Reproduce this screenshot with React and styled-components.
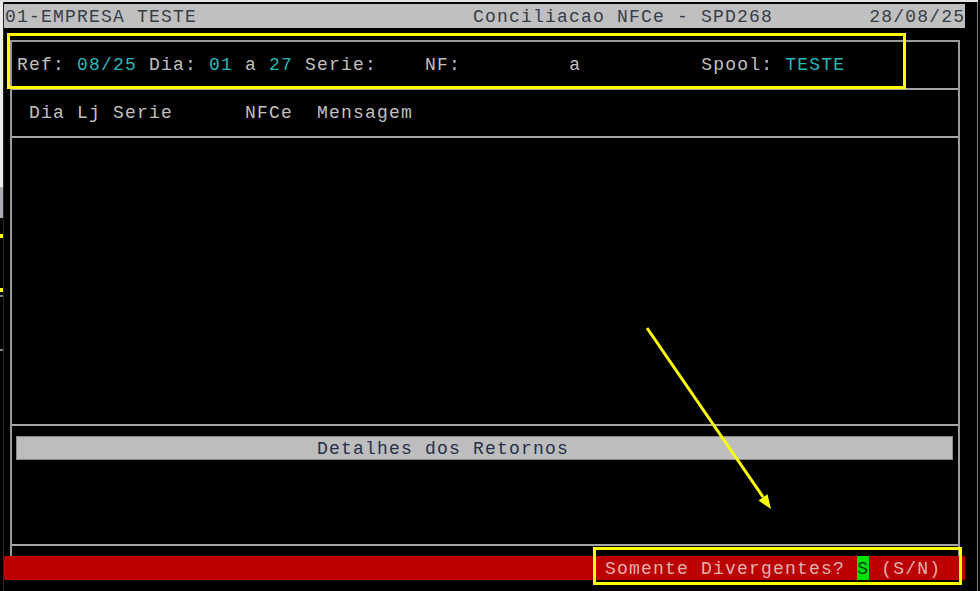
import React from "react";
import styled, { createGlobalStyle } from "styled-components";

const Global = createGlobalStyle`
  html, body { margin: 0; padding: 0; background: #000; }
  #root { width: 980px; height: 591px; }
`;

const Root = styled.div`
  position: relative;
  width: 980px;
  height: 591px;
  background: #000;
  overflow: hidden;
  display: flex;
  flex-direction: column;
  font-family: "Liberation Mono", "Courier New", monospace;
  font-size: 18px;
  letter-spacing: 1.2px;
`;

const TopEdge = styled.div`
  flex: 0 0 2px;
  width: 978px;
  background: #e2e2e2;
`;

const Main = styled.div`
  flex: 1;
  display: flex;
`;

const LeftEdge = styled.div`
  width: 3px;
  display: flex;
  flex-direction: column;
  border-right: 1px solid #262626;
`;

const Seg = styled.div`
  flex: 0 0 ${(p) => p.$h}px;
  background: ${(p) => p.$c};
`;

const Screen = styled.div`
  margin-top: 2px;
  width: 961px;
  height: 576px;
  display: flex;
  flex-direction: column;
`;

const RightLine = styled.div`
  margin-left: 12px;
  width: 1px;
  background: #7c7c7c;
`;

const Line = styled.div`
  box-sizing: border-box;
  height: 24px;
  padding-top: 3px;
  line-height: 21px;
  white-space: pre;
  color: ${(p) => p.$color || "#c0c0c0"};
`;

const TitleBar = styled(Line)`
  background: #c0c0c0;
  color: #383d48;
  padding-left: 1px;
`;

const StatusBar = styled(Line)`
  background: #bb0000;
  color: #e2b2b2;
  padding-left: 1px;
`;

const Val = styled.span`
  color: #27b8b8;
`;

const Cursor = styled.span`
  display: inline-block;
  vertical-align: top;
  box-sizing: border-box;
  width: 12px;
  height: 24px;
  margin-top: -3px;
  padding-top: 3px;
  background: #00e000;
  color: #0b3b0b;
`;

const Frame = styled.div`
  box-sizing: border-box;
  margin: 12px 0 0 6px;
  width: 950px;
  height: 516px;
  border: 2px solid #9a9a9a;
  border-bottom: none;
  display: flex;
  flex-direction: column;
`;

const Section = styled.div`
  box-sizing: border-box;
  flex: 0 0 ${(p) => p.$h}px;
  border-bottom: 2px solid #a6a6a6;
  padding-top: ${(p) => p.$pt || 0}px;
  padding-left: ${(p) => p.$pl || 0}px;
`;

const Tail = styled.div`
  flex: 1;
`;

const DetailBar = styled(Line)`
  margin-left: 4px;
  width: 937px;
  background: #bdbdbd;
  color: #26304a;
  box-shadow: inset 0 0 0 1px #8a8a8a;
  padding-left: 1px;
`;

const Annot = styled.div`
  position: absolute;
  box-sizing: border-box;
  border: 3px solid #ffff00;
  left: ${(p) => p.$x}px;
  top: ${(p) => p.$y}px;
  width: ${(p) => p.$w}px;
  height: ${(p) => p.$hh}px;
  pointer-events: none;
`;

const ArrowLayer = styled.svg`
  position: absolute;
  left: 0;
  top: 0;
  width: 980px;
  height: 591px;
  pointer-events: none;
`;

export default function App() {
  return (
    <>
      <Global />
      <Root>
        <TopEdge />
        <Main>
          <LeftEdge>
            <Seg $h={185} $c="#ececec" />
            <Seg $h={31} $c="#a9acb0" />
            <Seg $h={16} $c="#000" />
            <Seg $h={4} $c="#ffff00" />
            <Seg $h={50} $c="#000" />
            <Seg $h={4} $c="#ffff00" />
            <Seg $h={3} $c="#000" />
            <Seg $h={2} $c="#808080" />
            <Seg $h={52} $c="#000" />
            <Seg $h={2} $c="#808080" />
          </LeftEdge>
          <Screen>
            <TitleBar>
              {"01-EMPRESA TESTE                       Conciliacao NFCe - SPD268        28/08/25"}
            </TitleBar>
            <Frame>
              <Section $h={48} $pt={10} $pl={5}>
                <Line>
                  {"Ref: "}
                  <Val>08/25</Val>
                  {" Dia: "}
                  <Val>01</Val>
                  {" a "}
                  <Val>27</Val>
                  {" Serie:    NF:         a          Spool: "}
                  <Val>TESTE</Val>
                </Line>
              </Section>
              <Section $h={48} $pt={10} $pl={5}>
                <Line>{" Dia Lj Serie      NFCe  Mensagem"}</Line>
              </Section>
              <Section $h={288} />
              <Section $h={120} $pt={10}>
                <DetailBar>{"                         Detalhes dos Retornos"}</DetailBar>
              </Section>
              <Tail />
            </Frame>
            <StatusBar>
              {"                                                  Somente Divergentes? "}
              <Cursor>S</Cursor>
              {" (S/N)"}
            </StatusBar>
          </Screen>
          <RightLine />
        </Main>
        <Annot $x={7} $y={33} $w={899} $hh={56} />
        <Annot $x={593} $y={547} $w={369} $hh={38} />
        <ArrowLayer viewBox="0 0 980 591">
          <line x1="647" y1="328" x2="763" y2="497" stroke="#ffff00" strokeWidth="3" />
          <polygon points="771,509 758.5,500.5 767.5,494.3" fill="#ffff00" />
        </ArrowLayer>
      </Root>
    </>
  );
}
